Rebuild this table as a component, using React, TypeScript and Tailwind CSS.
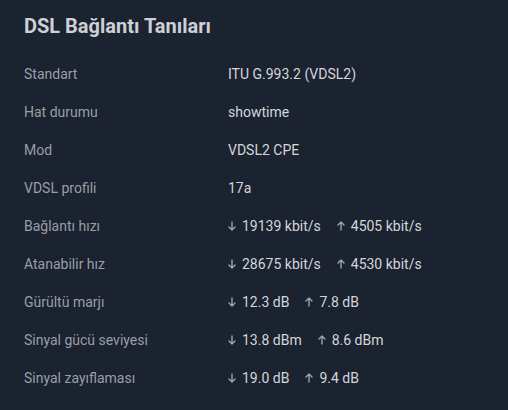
import React from 'react';

type Val = string | { down: string; up: string };

const rows: { label: string; value: Val }[] = [
  { label: 'Standart', value: 'ITU G.993.2 (VDSL2)' },
  { label: 'Hat durumu', value: 'showtime' },
  { label: 'Mod', value: 'VDSL2 CPE' },
  { label: 'VDSL profili', value: '17a' },
  { label: 'Bağlantı hızı', value: { down: '19139 kbit/s', up: '4505 kbit/s' } },
  { label: 'Atanabilir hız', value: { down: '28675 kbit/s', up: '4530 kbit/s' } },
  { label: 'Gürültü marjı', value: { down: '12.3 dB', up: '7.8 dB' } },
  { label: 'Sinyal gücü seviyesi', value: { down: '13.8 dBm', up: '8.6 dBm' } },
  { label: 'Sinyal zayıflaması', value: { down: '19.0 dB', up: '9.4 dB' } },
];

function Arrow({ up }: { up?: boolean }) {
  return (
    <svg
      width="8"
      height="10"
      viewBox="0 0 8 10"
      fill="none"
      stroke="#9ca3af"
      strokeWidth="1.4"
      strokeLinecap="round"
      strokeLinejoin="round"
      className={up ? 'rotate-180' : ''}
    >
      <path d="M4 1v8M1 6l3 3 3-3" />
    </svg>
  );
}

export default function App() {
  return (
    <div
      className="w-[508px] h-[410px] bg-[#1b2230] px-6 pt-3"
      style={{ fontFamily: 'Roboto, sans-serif' }}
    >
      <h1 className="text-[20px] leading-7 font-bold text-[#cdd0d5]">DSL Bağlantı Tanıları</h1>

      <div className="mt-[15px]">
        {rows.map((r) => (
          <div key={r.label} className="grid grid-cols-[204px_1fr] h-[38px] items-center text-sm">
            <span className="text-[#9a9ea6]">{r.label}</span>
            {typeof r.value === 'string' ? (
              <span className="text-[#d4d6da]">{r.value}</span>
            ) : (
              <div className="flex items-center text-[#d4d6da]">
                <Arrow />
                <span className="ml-[6px]">{r.value.down}</span>
                <span className="ml-4">
                  <Arrow up />
                </span>
                <span className="ml-[6px]">{r.value.up}</span>
              </div>
            )}
          </div>
        ))}
      </div>
    </div>
  );
}
